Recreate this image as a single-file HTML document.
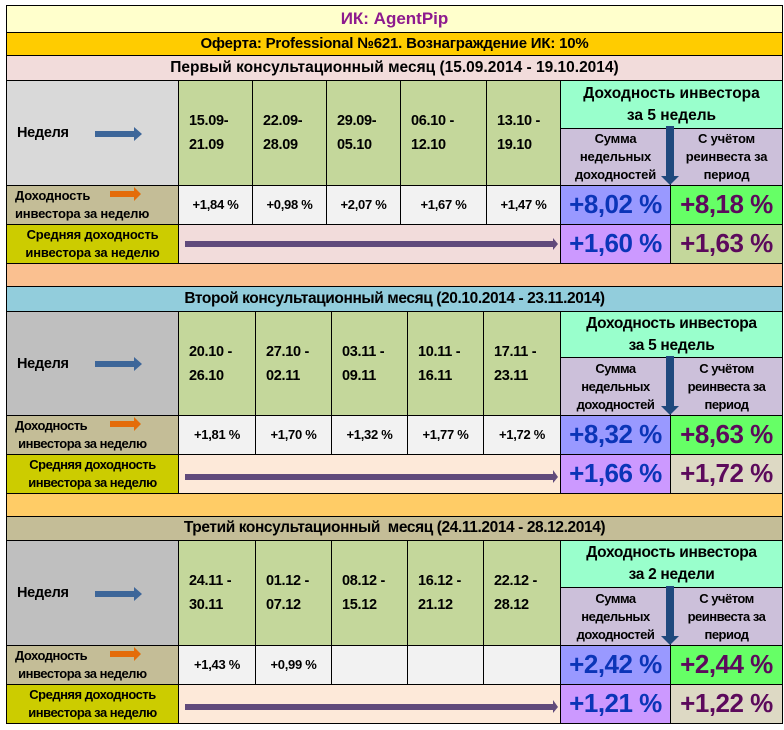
<!DOCTYPE html>
<html><head><meta charset="utf-8"><style>
body{margin:0;width:784px;height:730px;background:#fff;position:relative;overflow:hidden;font-family:"Liberation Sans","DejaVu Sans",sans-serif;font-weight:bold;color:#000}
.c{position:absolute;box-sizing:border-box;border:1px solid #000;display:flex;align-items:center;justify-content:center;text-align:center;line-height:1.3}
.l{justify-content:flex-start;text-align:left;padding-left:10px}
.n{font-size:14.5px;letter-spacing:-0.3px;line-height:24px}
.s{font-size:13px;letter-spacing:-0.2px}
.v{font-size:13px;letter-spacing:-0.3px}
.big{font-size:26px;letter-spacing:-0.5px}
.a{position:absolute}
</style></head><body>
<div class="c" style="left:6px;top:5px;width:777px;height:28px;background:#ffffcc;color:#8e1a8e;font-size:17px">ИК: AgentPip</div>
<div class="c" style="left:6px;top:32px;width:777px;height:24px;background:#ffcc00;font-size:15px;letter-spacing:-0.2px">Оферта: Professional №621. Вознаграждение ИК: 10%</div>

<!-- Section 1 -->
<div class="c" style="left:6px;top:55px;width:777px;height:26px;background:#f2dcdb;font-size:15.5px;letter-spacing:0px">Первый консультационный месяц (15.09.2014 - 19.10.2014)</div>
<div class="c l n" style="left:6px;top:80px;width:173px;height:106px;background:#d9d9d9;padding-left:10px">Неделя</div>
<div class="c n" style="left:178px;top:80px;width:75px;height:106px;background:#c4d79b;justify-content:flex-start;padding-left:10px;text-align:left">15.09-<br>21.09</div>
<div class="c n" style="left:252px;top:80px;width:75px;height:106px;background:#c4d79b;justify-content:flex-start;padding-left:10px;text-align:left">22.09-<br>28.09</div>
<div class="c n" style="left:326px;top:80px;width:75px;height:106px;background:#c4d79b;justify-content:flex-start;padding-left:10px;text-align:left">29.09-<br>05.10</div>
<div class="c n" style="left:400px;top:80px;width:87px;height:106px;background:#c4d79b;justify-content:flex-start;padding-left:10px;text-align:left">06.10 -<br>12.10</div>
<div class="c n" style="left:486px;top:80px;width:75px;height:106px;background:#c4d79b;justify-content:flex-start;padding-left:10px;text-align:left">13.10 -<br>19.10</div>
<div class="c" style="left:560px;top:80px;width:223px;height:49px;background:#99ffcc;font-size:15.5px;line-height:22px">Доходность инвестора<br>за 5 недель</div>
<div class="c s" style="left:560px;top:128px;width:111px;height:58px;background:#ccc0da;line-height:18px">Сумма<br>недельных<br>доходностей</div>
<div class="c s" style="left:670px;top:128px;width:113px;height:58px;background:#ccc0da;line-height:18px">С учётом<br>реинвеста за<br>период</div>
<div class="c l s" style="left:6px;top:185px;width:173px;height:40px;background:#c4bd97;line-height:18px;padding-left:8px">Доходность<br>инвестора за неделю</div>
<div class="c v" style="left:178px;top:185px;width:75px;height:40px;background:#f2f2f2">+1,84 %</div>
<div class="c v" style="left:252px;top:185px;width:75px;height:40px;background:#f2f2f2">+0,98 %</div>
<div class="c v" style="left:326px;top:185px;width:75px;height:40px;background:#f2f2f2">+2,07 %</div>
<div class="c v" style="left:400px;top:185px;width:87px;height:40px;background:#f2f2f2">+1,67 %</div>
<div class="c v" style="left:486px;top:185px;width:75px;height:40px;background:#f2f2f2">+1,47 %</div>
<div class="c big" style="left:560px;top:185px;width:111px;height:40px;background:#9999ff;color:#0b35b8">+8,02 %</div>
<div class="c big" style="left:670px;top:185px;width:113px;height:40px;background:#66ff66;color:#5c0a5c">+8,18 %</div>
<div class="c s" style="left:6px;top:224px;width:173px;height:40px;background:#cccc00;line-height:18px">Средняя доходность<br>инвестора за неделю</div>
<div class="c" style="left:178px;top:224px;width:383px;height:40px;background:#f2dcdb"></div>
<div class="c big" style="left:560px;top:224px;width:111px;height:40px;background:#cc99ff;color:#0b35b8">+1,60 %</div>
<div class="c big" style="left:670px;top:224px;width:113px;height:40px;background:#c4d79b;color:#5c0a5c">+1,63 %</div>
<div class="c" style="left:6px;top:263px;width:777px;height:24px;background:#fac090"></div>

<!-- Section 2 -->
<div class="c" style="left:6px;top:286px;width:777px;height:26px;background:#92cddc;font-size:15.5px;letter-spacing:-0.4px">Второй консультационный месяц (20.10.2014 - 23.11.2014)</div>
<div class="c l n" style="left:6px;top:311px;width:173px;height:105px;background:#bfbfbf">Неделя</div>
<div class="c n" style="left:178px;top:311px;width:78px;height:105px;background:#c4d79b;justify-content:flex-start;padding-left:10px;text-align:left">20.10 -<br>26.10</div>
<div class="c n" style="left:255px;top:311px;width:77px;height:105px;background:#c4d79b;justify-content:flex-start;padding-left:10px;text-align:left">27.10 -<br>02.11</div>
<div class="c n" style="left:331px;top:311px;width:77px;height:105px;background:#c4d79b;justify-content:flex-start;padding-left:10px;text-align:left">03.11 -<br>09.11</div>
<div class="c n" style="left:407px;top:311px;width:77px;height:105px;background:#c4d79b;justify-content:flex-start;padding-left:10px;text-align:left">10.11 -<br>16.11</div>
<div class="c n" style="left:483px;top:311px;width:78px;height:105px;background:#c4d79b;justify-content:flex-start;padding-left:10px;text-align:left">17.11 -<br>23.11</div>
<div class="c" style="left:560px;top:311px;width:223px;height:47px;background:#99ffcc;font-size:15.5px;line-height:22px;letter-spacing:-0.3px">Доходность инвестора<br>за 5 недель</div>
<div class="c s" style="left:560px;top:357px;width:111px;height:59px;background:#ccc0da;line-height:18px;letter-spacing:-0.5px">Сумма<br>недельных<br>доходностей</div>
<div class="c s" style="left:670px;top:357px;width:113px;height:59px;background:#ccc0da;line-height:18px;letter-spacing:-0.5px">С учётом<br>реинвеста за<br>период</div>
<div class="c l s" style="left:6px;top:415px;width:173px;height:40px;background:#c4bd97;line-height:18px;padding-left:8px;letter-spacing:-0.5px">Доходность<br>&nbsp;инвестора за неделю</div>
<div class="c v" style="left:178px;top:415px;width:78px;height:40px;background:#f2f2f2">+1,81 %</div>
<div class="c v" style="left:255px;top:415px;width:77px;height:40px;background:#f2f2f2">+1,70 %</div>
<div class="c v" style="left:331px;top:415px;width:77px;height:40px;background:#f2f2f2">+1,32 %</div>
<div class="c v" style="left:407px;top:415px;width:77px;height:40px;background:#f2f2f2">+1,77 %</div>
<div class="c v" style="left:483px;top:415px;width:78px;height:40px;background:#f2f2f2">+1,72 %</div>
<div class="c big" style="left:560px;top:415px;width:111px;height:40px;background:#9999ff;color:#0b35b8">+8,32 %</div>
<div class="c big" style="left:670px;top:415px;width:113px;height:40px;background:#66ff66;color:#5c0a5c">+8,63 %</div>
<div class="c s" style="left:6px;top:454px;width:173px;height:40px;background:#cccc00;line-height:18px;letter-spacing:-0.5px">Средняя доходность<br>инвестора за неделю</div>
<div class="c" style="left:178px;top:454px;width:383px;height:40px;background:#fde9d9"></div>
<div class="c big" style="left:560px;top:454px;width:111px;height:40px;background:#cc99ff;color:#0b35b8">+1,66 %</div>
<div class="c big" style="left:670px;top:454px;width:113px;height:40px;background:#ddd9c4;color:#5c0a5c">+1,72 %</div>
<div class="c" style="left:6px;top:493px;width:777px;height:24px;background:#ffcc66"></div>

<!-- Section 3 -->
<div class="c" style="left:6px;top:516px;width:777px;height:25px;background:#c4bd97;font-size:15.5px;letter-spacing:-0.4px">Третий консультационный&nbsp; месяц (24.11.2014 - 28.12.2014)</div>
<div class="c l n" style="left:6px;top:540px;width:173px;height:106px;background:#bfbfbf">Неделя</div>
<div class="c n" style="left:178px;top:540px;width:78px;height:106px;background:#c4d79b;justify-content:flex-start;padding-left:10px;text-align:left">24.11 -<br>30.11</div>
<div class="c n" style="left:255px;top:540px;width:77px;height:106px;background:#c4d79b;justify-content:flex-start;padding-left:10px;text-align:left">01.12 -<br>07.12</div>
<div class="c n" style="left:331px;top:540px;width:77px;height:106px;background:#c4d79b;justify-content:flex-start;padding-left:10px;text-align:left">08.12 -<br>15.12</div>
<div class="c n" style="left:407px;top:540px;width:77px;height:106px;background:#c4d79b;justify-content:flex-start;padding-left:10px;text-align:left">16.12 -<br>21.12</div>
<div class="c n" style="left:483px;top:540px;width:78px;height:106px;background:#c4d79b;justify-content:flex-start;padding-left:10px;text-align:left">22.12 -<br>28.12</div>
<div class="c" style="left:560px;top:540px;width:223px;height:48px;background:#99ffcc;font-size:15.5px;line-height:22px;letter-spacing:-0.3px">Доходность инвестора<br>за 2 недели</div>
<div class="c s" style="left:560px;top:587px;width:111px;height:59px;background:#ccc0da;line-height:18px;letter-spacing:-0.5px">Сумма<br>недельных<br>доходностей</div>
<div class="c s" style="left:670px;top:587px;width:113px;height:59px;background:#ccc0da;line-height:18px;letter-spacing:-0.5px">С учётом<br>реинвеста за<br>период</div>
<div class="c l s" style="left:6px;top:645px;width:173px;height:40px;background:#c4bd97;line-height:18px;padding-left:8px;letter-spacing:-0.5px">Доходность<br>&nbsp;инвестора за неделю</div>
<div class="c v" style="left:178px;top:645px;width:78px;height:40px;background:#f2f2f2">+1,43 %</div>
<div class="c v" style="left:255px;top:645px;width:77px;height:40px;background:#f2f2f2">+0,99 %</div>
<div class="c v" style="left:331px;top:645px;width:77px;height:40px;background:#f2f2f2"></div>
<div class="c v" style="left:407px;top:645px;width:77px;height:40px;background:#f2f2f2"></div>
<div class="c v" style="left:483px;top:645px;width:78px;height:40px;background:#f2f2f2"></div>
<div class="c big" style="left:560px;top:645px;width:111px;height:40px;background:#9999ff;color:#0b35b8">+2,42 %</div>
<div class="c big" style="left:670px;top:645px;width:113px;height:40px;background:#66ff66;color:#5c0a5c">+2,44 %</div>
<div class="c s" style="left:6px;top:684px;width:173px;height:40px;background:#cccc00;line-height:18px;letter-spacing:-0.5px">Средняя доходность<br>инвестора за неделю</div>
<div class="c" style="left:178px;top:684px;width:383px;height:40px;background:#fde9d9"></div>
<div class="c big" style="left:560px;top:684px;width:111px;height:40px;background:#cc99ff;color:#0b35b8">+1,21 %</div>
<div class="c big" style="left:670px;top:684px;width:113px;height:40px;background:#ddd9c4;color:#5c0a5c">+1,22 %</div>

<!-- Arrows -->
<svg class="a" style="left:0;top:0" width="784" height="730">
<g fill="#3d6699">
<polygon points="95,131 134,131 134,127 142,134 134,141 134,137 95,137"/>
<polygon points="95,361 134,361 134,357 142,364 134,371 134,367 95,367"/>
<polygon points="95,591 134,591 134,587 142,594 134,601 134,597 95,597"/>
</g>
<g fill="#e46c0a">
<polygon points="110,191 134,191 134,187 141,194 134,201 134,197 110,197"/>
<polygon points="110,421 134,421 134,417 141,424 134,431 134,427 110,427"/>
<polygon points="110,651 134,651 134,647 141,654 134,661 134,657 110,657"/>
</g>
<g fill="#604a7b">
<polygon points="185,241 553,241 553,238 558,244 553,250 553,247 185,247"/>
<polygon points="185,474 553,474 553,470 558,477 553,483 553,480 185,480"/>
<polygon points="185,704 553,704 553,700 558,707 553,713 553,710 185,710"/>
</g>
<g fill="#1f497d">
<polygon points="666,126 674,126 674,176 679,176 670,185 661,176 666,176"/>
<polygon points="666,356 674,356 674,406 679,406 670,415 661,406 666,406"/>
<polygon points="666,586 674,586 674,636 679,636 670,645 661,636 666,636"/>
</g>
</svg>
</body></html>
